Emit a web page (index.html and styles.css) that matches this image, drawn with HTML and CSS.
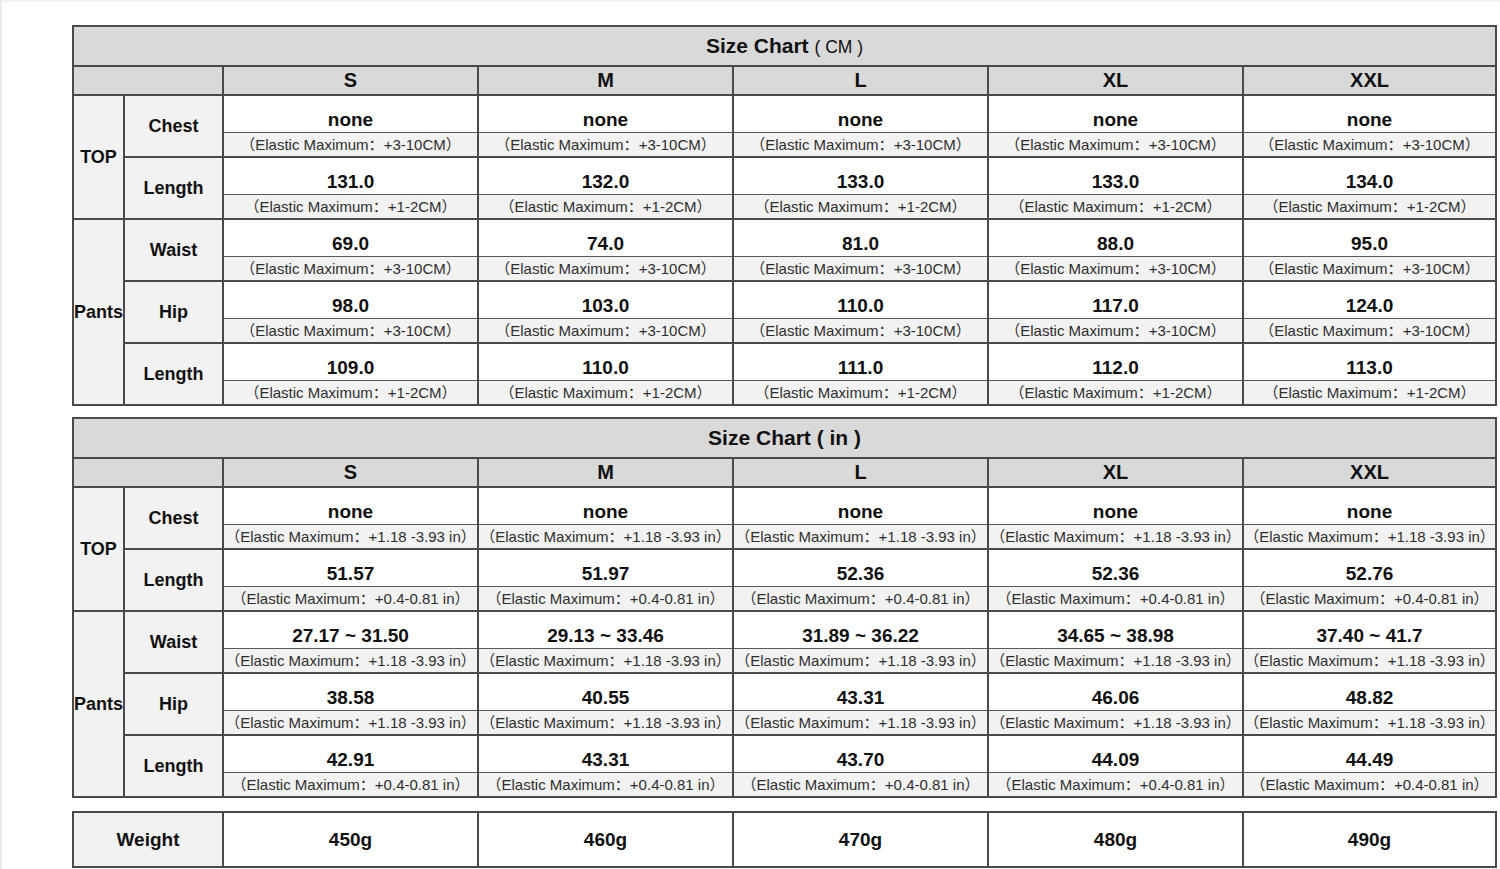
FILE: index.html
```html
<!DOCTYPE html>
<html>
<head>
<meta charset="utf-8">
<link rel="stylesheet" href="styles.css">
</head>
<body>
<div class="page">
  <table class="chart">
    <colgroup><col class="c-grp"><col class="c-lbl"><col class="c-size"><col class="c-size"><col class="c-size"><col class="c-size"><col class="c-last"></colgroup>
    <tr class="title-row"><th colspan="7">Size Chart <span class="unit">( CM )</span></th></tr>
    <tr class="head"><th colspan="2"></th><th>S</th><th>M</th><th>L</th><th>XL</th><th>XXL</th></tr>
    <tr class="val"><th rowspan="4" class="grp">TOP</th><th rowspan="2" class="lbl">Chest</th><td>none</td><td>none</td><td>none</td><td>none</td><td>none</td></tr>
    <tr class="sub"><td><span class="fw">（</span>Elastic Maximum<span class="fw">：</span>+3-10CM<span class="fw">）</span></td><td><span class="fw">（</span>Elastic Maximum<span class="fw">：</span>+3-10CM<span class="fw">）</span></td><td><span class="fw">（</span>Elastic Maximum<span class="fw">：</span>+3-10CM<span class="fw">）</span></td><td><span class="fw">（</span>Elastic Maximum<span class="fw">：</span>+3-10CM<span class="fw">）</span></td><td><span class="fw">（</span>Elastic Maximum<span class="fw">：</span>+3-10CM<span class="fw">）</span></td></tr>
    <tr class="val"><th rowspan="2" class="lbl">Length</th><td>131.0</td><td>132.0</td><td>133.0</td><td>133.0</td><td>134.0</td></tr>
    <tr class="sub"><td><span class="fw">（</span>Elastic Maximum<span class="fw">：</span>+1-2CM<span class="fw">）</span></td><td><span class="fw">（</span>Elastic Maximum<span class="fw">：</span>+1-2CM<span class="fw">）</span></td><td><span class="fw">（</span>Elastic Maximum<span class="fw">：</span>+1-2CM<span class="fw">）</span></td><td><span class="fw">（</span>Elastic Maximum<span class="fw">：</span>+1-2CM<span class="fw">）</span></td><td><span class="fw">（</span>Elastic Maximum<span class="fw">：</span>+1-2CM<span class="fw">）</span></td></tr>
    <tr class="val"><th rowspan="6" class="grp">Pants</th><th rowspan="2" class="lbl">Waist</th><td>69.0</td><td>74.0</td><td>81.0</td><td>88.0</td><td>95.0</td></tr>
    <tr class="sub"><td><span class="fw">（</span>Elastic Maximum<span class="fw">：</span>+3-10CM<span class="fw">）</span></td><td><span class="fw">（</span>Elastic Maximum<span class="fw">：</span>+3-10CM<span class="fw">）</span></td><td><span class="fw">（</span>Elastic Maximum<span class="fw">：</span>+3-10CM<span class="fw">）</span></td><td><span class="fw">（</span>Elastic Maximum<span class="fw">：</span>+3-10CM<span class="fw">）</span></td><td><span class="fw">（</span>Elastic Maximum<span class="fw">：</span>+3-10CM<span class="fw">）</span></td></tr>
    <tr class="val"><th rowspan="2" class="lbl">Hip</th><td>98.0</td><td>103.0</td><td>110.0</td><td>117.0</td><td>124.0</td></tr>
    <tr class="sub"><td><span class="fw">（</span>Elastic Maximum<span class="fw">：</span>+3-10CM<span class="fw">）</span></td><td><span class="fw">（</span>Elastic Maximum<span class="fw">：</span>+3-10CM<span class="fw">）</span></td><td><span class="fw">（</span>Elastic Maximum<span class="fw">：</span>+3-10CM<span class="fw">）</span></td><td><span class="fw">（</span>Elastic Maximum<span class="fw">：</span>+3-10CM<span class="fw">）</span></td><td><span class="fw">（</span>Elastic Maximum<span class="fw">：</span>+3-10CM<span class="fw">）</span></td></tr>
    <tr class="val"><th rowspan="2" class="lbl">Length</th><td>109.0</td><td>110.0</td><td>111.0</td><td>112.0</td><td>113.0</td></tr>
    <tr class="sub"><td><span class="fw">（</span>Elastic Maximum<span class="fw">：</span>+1-2CM<span class="fw">）</span></td><td><span class="fw">（</span>Elastic Maximum<span class="fw">：</span>+1-2CM<span class="fw">）</span></td><td><span class="fw">（</span>Elastic Maximum<span class="fw">：</span>+1-2CM<span class="fw">）</span></td><td><span class="fw">（</span>Elastic Maximum<span class="fw">：</span>+1-2CM<span class="fw">）</span></td><td><span class="fw">（</span>Elastic Maximum<span class="fw">：</span>+1-2CM<span class="fw">）</span></td></tr>
  </table>

  <table class="chart">
    <colgroup><col class="c-grp"><col class="c-lbl"><col class="c-size"><col class="c-size"><col class="c-size"><col class="c-size"><col class="c-last"></colgroup>
    <tr class="title-row"><th colspan="7">Size Chart <span class="unit bold">( in )</span></th></tr>
    <tr class="head"><th colspan="2"></th><th>S</th><th>M</th><th>L</th><th>XL</th><th>XXL</th></tr>
    <tr class="val"><th rowspan="4" class="grp">TOP</th><th rowspan="2" class="lbl">Chest</th><td>none</td><td>none</td><td>none</td><td>none</td><td>none</td></tr>
    <tr class="sub"><td><span class="fw">（</span>Elastic Maximum<span class="fw">：</span>+1.18 -3.93 in<span class="fw">）</span></td><td><span class="fw">（</span>Elastic Maximum<span class="fw">：</span>+1.18 -3.93 in<span class="fw">）</span></td><td><span class="fw">（</span>Elastic Maximum<span class="fw">：</span>+1.18 -3.93 in<span class="fw">）</span></td><td><span class="fw">（</span>Elastic Maximum<span class="fw">：</span>+1.18 -3.93 in<span class="fw">）</span></td><td><span class="fw">（</span>Elastic Maximum<span class="fw">：</span>+1.18 -3.93 in<span class="fw">）</span></td></tr>
    <tr class="val"><th rowspan="2" class="lbl">Length</th><td>51.57</td><td>51.97</td><td>52.36</td><td>52.36</td><td>52.76</td></tr>
    <tr class="sub"><td><span class="fw">（</span>Elastic Maximum<span class="fw">：</span>+0.4-0.81 in<span class="fw">）</span></td><td><span class="fw">（</span>Elastic Maximum<span class="fw">：</span>+0.4-0.81 in<span class="fw">）</span></td><td><span class="fw">（</span>Elastic Maximum<span class="fw">：</span>+0.4-0.81 in<span class="fw">）</span></td><td><span class="fw">（</span>Elastic Maximum<span class="fw">：</span>+0.4-0.81 in<span class="fw">）</span></td><td><span class="fw">（</span>Elastic Maximum<span class="fw">：</span>+0.4-0.81 in<span class="fw">）</span></td></tr>
    <tr class="val"><th rowspan="6" class="grp">Pants</th><th rowspan="2" class="lbl">Waist</th><td>27.17 ~ 31.50</td><td>29.13 ~ 33.46</td><td>31.89 ~ 36.22</td><td>34.65 ~ 38.98</td><td>37.40 ~ 41.7</td></tr>
    <tr class="sub"><td><span class="fw">（</span>Elastic Maximum<span class="fw">：</span>+1.18 -3.93 in<span class="fw">）</span></td><td><span class="fw">（</span>Elastic Maximum<span class="fw">：</span>+1.18 -3.93 in<span class="fw">）</span></td><td><span class="fw">（</span>Elastic Maximum<span class="fw">：</span>+1.18 -3.93 in<span class="fw">）</span></td><td><span class="fw">（</span>Elastic Maximum<span class="fw">：</span>+1.18 -3.93 in<span class="fw">）</span></td><td><span class="fw">（</span>Elastic Maximum<span class="fw">：</span>+1.18 -3.93 in<span class="fw">）</span></td></tr>
    <tr class="val"><th rowspan="2" class="lbl">Hip</th><td>38.58</td><td>40.55</td><td>43.31</td><td>46.06</td><td>48.82</td></tr>
    <tr class="sub"><td><span class="fw">（</span>Elastic Maximum<span class="fw">：</span>+1.18 -3.93 in<span class="fw">）</span></td><td><span class="fw">（</span>Elastic Maximum<span class="fw">：</span>+1.18 -3.93 in<span class="fw">）</span></td><td><span class="fw">（</span>Elastic Maximum<span class="fw">：</span>+1.18 -3.93 in<span class="fw">）</span></td><td><span class="fw">（</span>Elastic Maximum<span class="fw">：</span>+1.18 -3.93 in<span class="fw">）</span></td><td><span class="fw">（</span>Elastic Maximum<span class="fw">：</span>+1.18 -3.93 in<span class="fw">）</span></td></tr>
    <tr class="val"><th rowspan="2" class="lbl">Length</th><td>42.91</td><td>43.31</td><td>43.70</td><td>44.09</td><td>44.49</td></tr>
    <tr class="sub"><td><span class="fw">（</span>Elastic Maximum<span class="fw">：</span>+0.4-0.81 in<span class="fw">）</span></td><td><span class="fw">（</span>Elastic Maximum<span class="fw">：</span>+0.4-0.81 in<span class="fw">）</span></td><td><span class="fw">（</span>Elastic Maximum<span class="fw">：</span>+0.4-0.81 in<span class="fw">）</span></td><td><span class="fw">（</span>Elastic Maximum<span class="fw">：</span>+0.4-0.81 in<span class="fw">）</span></td><td><span class="fw">（</span>Elastic Maximum<span class="fw">：</span>+0.4-0.81 in<span class="fw">）</span></td></tr>
  </table>

  <table class="chart weight">
    <colgroup><col class="c-grp"><col class="c-lbl"><col class="c-size"><col class="c-size"><col class="c-size"><col class="c-size"><col class="c-last"></colgroup>
    <tr><th colspan="2" class="lbl">Weight</th><td>450g</td><td>460g</td><td>470g</td><td>480g</td><td>490g</td></tr>
  </table>
</div>
</body>
</html>
```

FILE: styles.css
```css
html, body {
  margin: 0;
  padding: 0;
  background: #ffffff;
}

.page {
  box-sizing: border-box;
  width: 1500px;
  height: 869px;
  border-left: 2px solid #ececec;
  border-top: 2px solid #f2f2f2;
  padding: 23px 0 0 70px;
  display: flex;
  flex-direction: column;
  gap: 11px;
  font-family: "Liberation Sans", Arial, "Noto Sans CJK SC", sans-serif;
  color: #111;
}

.chart {
  table-layout: fixed;
  border-collapse: collapse;
  width: 1424px;
  border: 2px solid #444;
}

.c-grp { width: 51px; }
.c-lbl { width: 99px; }
.c-size { width: 255px; }
.c-last { width: 253px; }

.chart th,
.chart td {
  border: 2px solid #4a4a4a;
  padding: 0;
  text-align: center;
  vertical-align: middle;
  white-space: nowrap;
  overflow: hidden;
}

.title-row th {
  height: 38px;
  background: #d9d9d9;
  font-size: 21px;
  font-weight: bold;
}

.unit {
  font-size: 17.5px;
  font-weight: normal;
}

.unit.bold {
  font-size: 21px;
  font-weight: bold;
}

.head th {
  height: 27px;
  background: #d9d9d9;
  font-size: 20px;
  font-weight: bold;
}

.grp,
.lbl {
  background: #f2f2f2;
  font-size: 18px;
  font-weight: bold;
}

.lbl {
  padding-right: 3px;
}

.val td {
  height: 35px;
  background: #ffffff;
  font-size: 19px;
  font-weight: bold;
  vertical-align: bottom;
  padding-bottom: 1px;
  border-bottom: 1px solid #5a5a5a;
}

.sub td {
  height: 23px;
  background: #f2f2f2;
  font-size: 15px;
  color: #2e2e2e;
  border-top: 1px solid #5a5a5a;
}

.fw {
  font-family: "Noto Sans CJK SC", sans-serif;
  font-size: 15px;
  line-height: 1;
}

.weight {
  margin-top: 2px;
}

.weight th,
.weight td {
  height: 53px;
  font-size: 19px;
  font-weight: bold;
}

.weight th {
  padding-right: 0;
}

.weight td {
  background: #ffffff;
}
```
